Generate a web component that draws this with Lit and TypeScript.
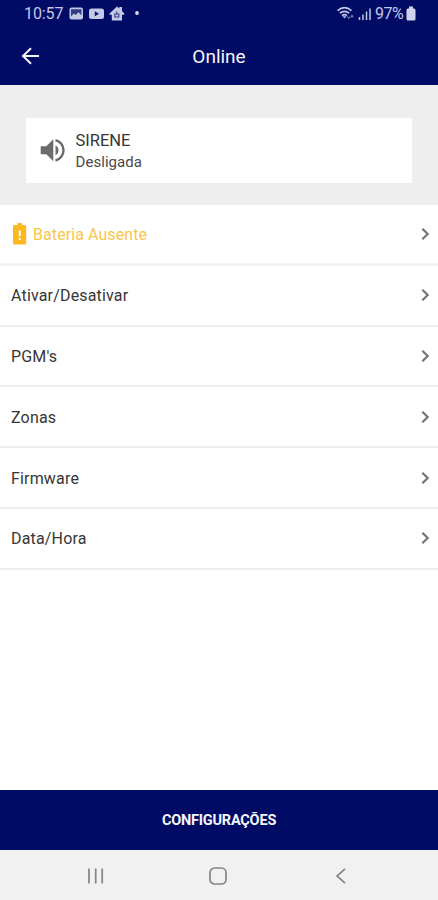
import { LitElement, html, css } from "lit";
import { customElement, property } from "lit/decorators.js";

@customElement("menu-row")
class MenuRow extends LitElement {
  @property() label = "";
  @property({ type: Boolean }) warning = false;

  static styles = css`
    :host {
      display: flex;
      align-items: center;
      box-sizing: border-box;
      height: 60.8px;
      padding: 0 8px 0 11px;
      border-bottom: 2px solid #eeeeee;
      color: #363636;
      font-size: 16px;
      letter-spacing: 0.17px;
    }
    :host([warning]) {
      border-bottom: 3px solid #f4f4f4;
      color: #fbc548;
      letter-spacing: 0.08px;
    }
    .battery {
      width: 15px;
      height: 22px;
      margin: 0 5px 0 2px;
      flex: none;
    }
    .label {
      flex: 1;
      padding-top: 2px;
      line-height: 20px;
      white-space: nowrap;
    }
    .chevron {
      width: 10px;
      height: 14px;
      flex: none;
    }
  `;

  render() {
    return html`
      ${this.warning
        ? html`<svg class="battery" viewBox="0 0 15 22">
            <path fill="#fbb81f" d="M4.5 0h4.500v2H11.600a1.600 1.600 0 0 1 1.600 1.600v16.300A1.600 1.600 0 0 1 11.600 21.500H1.600A1.600 1.600 0 0 1 0 19.900V3.600A1.600 1.600 0 0 1 1.600 2h2.900z" />
            <path fill="#fff" d="M5.700 7.500h2v5.800h-2zM5.700 15h2v2h-2z" />
          </svg>`
        : null}
      <span class="label">${this.label}</span>
      <svg class="chevron" viewBox="0 0 10 14">
        <path d="M2.300 1.700 7.700 7l-5.400 5.300" fill="none" stroke="#747474" stroke-width="2.200" />
      </svg>
    `;
  }
}

@customElement("app-root")
class AppRoot extends LitElement {
  static styles = css`
    :host {
      display: flex;
      flex-direction: column;
      height: 900px;
      overflow: hidden;
      background: #fff;
      font-family: Roboto, "Liberation Sans", sans-serif;
    }
    svg {
      display: block;
      flex: none;
    }
    .status {
      display: flex;
      align-items: center;
      box-sizing: border-box;
      height: 27px;
      padding: 0 22px 0 24px;
      background: #000b65;
      color: #c3c8e6;
      font-size: 16px;
      line-height: 27px;
    }
    .clock {
      width: 45px;
      letter-spacing: -0.1px;
    }
    .spacer {
      flex: 1;
    }
    .percent {
      width: 31px;
      margin-left: 4px;
      letter-spacing: -0.5px;
      white-space: nowrap;
    }
    .header {
      display: grid;
      grid-template-columns: 1fr auto 1fr;
      align-items: center;
      box-sizing: border-box;
      height: 58px;
      padding: 0 20px;
      background: #000b65;
      color: #f5f6fc;
    }
    .title {
      padding-top: 2px;
      font-size: 19px;
      line-height: 24px;
    }
    .panel {
      box-sizing: border-box;
      height: 120px;
      padding: 33px 26px 22px;
      background: #eeeeee;
    }
    .card {
      display: flex;
      align-items: center;
      box-sizing: border-box;
      height: 65px;
      padding-left: 14px;
      gap: 9.500px;
      background: #fff;
    }
    .text {
      padding-top: 2px;
    }
    .name {
      color: #363636;
      font-size: 16.500px;
      line-height: 22px;
    }
    .state {
      color: #4a4a4a;
      font-size: 15px;
      line-height: 21px;
      letter-spacing: 0.05px;
    }
    .list {
      flex: 1;
    }
    .settings {
      display: flex;
      align-items: center;
      justify-content: center;
      box-sizing: border-box;
      height: 60px;
      padding-top: 1px;
      background: #000b65;
      color: #f5f6fc;
      font-size: 14.500px;
      font-weight: 700;
      letter-spacing: -0.2px;
    }
    .nav {
      display: grid;
      grid-template-columns: repeat(3, 20px);
      justify-content: center;
      column-gap: 102.500px;
      align-items: center;
      box-sizing: border-box;
      height: 50px;
      padding: 2px 2px 0 0;
      background: #f1f1f1;
    }
  `;

  render() {
    const rows = ["Ativar/Desativar", "PGM's", "Zonas", "Firmware", "Data/Hora"];
    return html`
      <div class="status">
        <span class="clock">10:57</span>
        <svg width="72" height="16" viewBox="0 0 72 16">
          <rect x="0.500" y="1.500" width="13.500" height="12" rx="2" fill="#c3c8e6" />
          <path d="M2 3.200h10.500v6L9.500 6.200 6.500 9 4.800 7.500 2 10.500z" fill="#000b65" opacity=".75" />
          <rect x="20" y="2.500" width="15" height="10.500" rx="2.500" fill="#c3c8e6" />
          <path d="M25.800 5.200v5l4.200-2.500z" fill="#000b65" />
          <path d="M40.500 7.500 48 .500l2.300 2.100V1h2.700v4l2.300 2.500v1.300H53v5.700H42.800V8.800h-2.300z" fill="#c3c8e6" />
          <path d="M47.800 5.500v2.300M45.800 8v3h4V8z" fill="none" stroke="#000b65" stroke-width="1.100" opacity=".75" />
          <circle cx="68" cy="7" r="1.900" fill="#d9dcf0" />
        </svg>
        <span class="spacer"></span>
        <svg width="34" height="16" viewBox="0 0 34 16">
          <path d="M.500 4.600Q7.500-1.200 14.500 4.600M2.800 7.200q4.700-3.600 9.400 0M5 9.700q2.500-2 5 0" fill="none" stroke="#c3c8e6" stroke-width="1.700" />
          <path d="m5.500 10.300 2 2.200 2-2.200z" fill="#c3c8e6" />
          <path d="m10.500 10.500 1.200 2 1-2M14 11.500l1-2.500 1 2.500" fill="none" stroke="#8b92c4" stroke-width="1" />
          <path d="M22.500 11v3M26 8.500V14M29.500 5.500V14M33 2.500V14" stroke="#c3c8e6" stroke-width="1.500" />
        </svg>
        <span class="percent">97%</span>
        <svg width="10" height="15" viewBox="0 0 10 15">
          <path d="M3 .500h4v2h1q1.500 0 1.500 1.500v9q0 1.500-1.500 1.500H2Q.500 14.500.500 13V4Q.500 2.500 2 2.500h1z" fill="#d0d4ee" />
        </svg>
      </div>
      <div class="header">
        <svg width="20" height="20" viewBox="0 0 20 20">
          <path d="M11 2.200 3 10l8 7.800M3 10h16" fill="none" stroke="#f5f6fc" stroke-width="2" />
        </svg>
        <span class="title">Online</span>
      </div>
      <div class="panel">
        <div class="card">
          <svg width="26" height="26" viewBox="0 0 26 26">
            <path d="M.700 8.300h5.600L13.300 1.300v22l-7-7H.700zM15.500 7.300q3 1.600 3 5t-3 5z" fill="#6b6b6b" />
            <path d="M15.500 2.100a10.500 10.500 0 0 1 0 20.400" fill="none" stroke="#6b6b6b" stroke-width="2.400" />
          </svg>
          <div class="text">
            <div class="name">SIRENE</div>
            <div class="state">Desligada</div>
          </div>
        </div>
      </div>
      <div class="list">
        <menu-row warning label="Bateria Ausente"></menu-row>
        ${rows.map((label) => html`<menu-row .label=${label}></menu-row>`)}
      </div>
      <div class="settings">CONFIGURAÇÕES</div>
      <div class="nav">
        <svg width="20" height="20" viewBox="0 0 20 20">
          <path d="M3 2.500v15M9.700 2.500v15M16.200 2.500v15" stroke="#858585" stroke-width="1.700" />
        </svg>
        <svg width="20" height="20" viewBox="0 0 20 20">
          <rect x="2" y="2" width="16" height="16" rx="4.500" fill="none" stroke="#858585" stroke-width="1.700" />
        </svg>
        <svg width="20" height="20" viewBox="0 0 20 20">
          <path d="M14 2.800 6 10l8 7.200" fill="none" stroke="#858585" stroke-width="1.700" />
        </svg>
      </div>
    `;
  }
}
